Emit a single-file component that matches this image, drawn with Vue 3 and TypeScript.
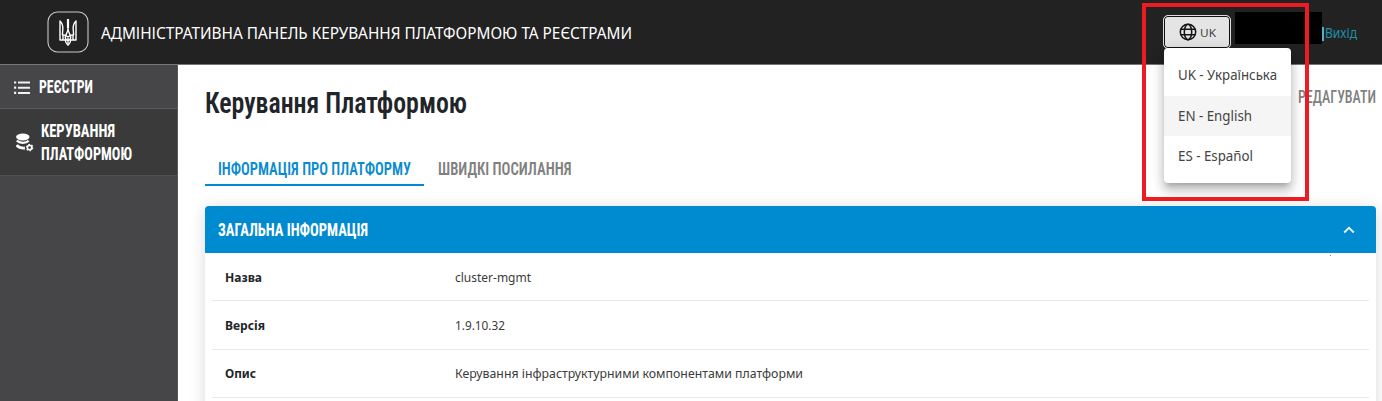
<script setup lang="ts">
import { defineComponent, h } from 'vue'

// Single line of text fitted to a given width; its box is as tall as the capitals.
const FitText = defineComponent({
  props: {
    text: { type: String, required: true },
    w: { type: Number, required: true },
    cap: { type: Number, required: true },
  },
  setup(props) {
    return () =>
      h('svg', { width: props.w, height: props.cap, style: { display: 'block', overflow: 'visible', flex: 'none' } }, [
        h('text', { x: 0, y: props.cap, textLength: props.w, lengthAdjust: 'spacingAndGlyphs', fill: 'currentColor' }, props.text),
      ])
  },
})

interface Line { text: string; w: number }
interface Row { label: Line; value: Line }

const languages: (Line & { active: boolean })[] = [
  { text: 'UK - Українська', w: 99, active: false },
  { text: 'EN - English', w: 74, active: true },
  { text: 'ES - Español', w: 75, active: false },
]

const rows: Row[] = [
  { label: { text: 'Назва', w: 37 }, value: { text: 'cluster-mgmt', w: 76 } },
  { label: { text: 'Версія', w: 40 }, value: { text: '1.9.10.32', w: 50 } },
  { label: { text: 'Опис', w: 31 }, value: { text: 'Керування інфраструктурними компонентами платформи', w: 348 } },
]
</script>

<template>
  <div class="page">
    <header class="header">
      <svg class="emblem" width="42" height="42" viewBox="0 0 42 42" fill="none">
        <rect x="1" y="1" width="40" height="40" rx="9.5" stroke="#c9c9c9" stroke-width="1.1" />
        <g stroke="#fff" stroke-width="1.4" stroke-linejoin="round">
          <path d="M13 10v19h5.200c.4 2.600 1.400 4.300 2.800 5.300 1.400-1 2.400-2.700 2.800-5.300H29V10c-2.200 2-3 4.800-2.800 8.200l.4 5.500c-2.300 0-4 .6-5.600 2.300-1.600-1.700-3.300-2.300-5.600-2.300l.4-5.500c.2-3.400-.6-6.200-2.800-8.200z" />
          <path d="M21 8.500v9c0 4-2.700 6-2.700 9 0 1.500 1 2.600 2.700 3.200 1.700-.6 2.700-1.700 2.700-3.200 0-3-2.700-5-2.700-9M16 24v5M26 24v5M18 29h6M21 27v6" />
          <path d="M21 8v9" stroke-width="2.200" />
        </g>
      </svg>
      <FitText class="brand" text="АДМІНІСТРАТИВНА ПАНЕЛЬ КЕРУВАННЯ ПЛАТФОРМОЮ ТА РЕЄСТРАМИ" :w="531" :cap="11" />
      <button class="lang" type="button">
        <svg width="18" height="18" viewBox="0 0 18 18" fill="none" stroke="#151515" stroke-width="1.5">
          <circle cx="9" cy="9" r="7.700" />
          <ellipse cx="9" cy="9" rx="3.700" ry="7.700" />
          <path d="M1.800 6.300h14.400M1.800 11.700h14.400" />
        </svg>
        <FitText class="code" text="UK" :w="16" :cap="9" />
      </button>
      <div class="user"></div>
      <div class="divider"></div>
      <FitText class="logout" text="Вихід" :w="32" :cap="10" />
    </header>

    <div class="body">
      <nav class="side">
        <div class="item">
          <svg class="list-icon" width="16" height="14" viewBox="0 0 16 14" fill="#f1f1f1">
            <path d="M0 .4h2.200v2.200H0zM0 5.600h2.200v2.200H0zM0 10.800h2.200v2.200H0zM4 .5h12v2H4zM4 5.700h12v2H4zM4 10.900h12v2H4z" />
          </svg>
          <FitText text="РЕЄСТРИ" :w="54" :cap="13" />
        </div>
        <div class="item current">
          <svg class="db-icon" width="18" height="19" viewBox="0 0 18 19" fill="none">
            <ellipse cx="6.800" cy="4" rx="6.700" ry="3.400" fill="#fff" />
            <path d="M.8 7.600c1.500 1.700 3.800 2.200 6 2.200s4.400-.5 5.900-2.100" stroke="#fff" stroke-width="2.200" />
            <path d="M.6 12c1.800 2.600 4.500 3.300 8.300 3" stroke="#fff" stroke-width="2.800" />
            <circle cx="13.600" cy="14.600" r="2.200" stroke="#fff" stroke-width="1.600" />
            <circle cx="13.600" cy="14.600" r="3.200" stroke="#fff" stroke-width="1.100" stroke-dasharray="1.700 1.650" />
          </svg>
          <div class="two-lines">
            <FitText text="КЕРУВАННЯ" :w="74" :cap="13" />
            <FitText text="ПЛАТФОРМОЮ" :w="91" :cap="13" />
          </div>
        </div>
      </nav>

      <main class="main">
        <div class="heading">
          <FitText class="title" text="Керування Платформою" :w="262" :cap="21" />
          <FitText class="edit" text="РЕДАГУВАТИ" :w="78" :cap="13" />
        </div>
        <div class="tabs">
          <div class="tab selected"><FitText text="ІНФОРМАЦІЯ ПРО ПЛАТФОРМУ" :w="193" :cap="13" /></div>
          <div class="tab"><FitText text="ШВИДКІ ПОСИЛАННЯ" :w="133.5" :cap="13" /></div>
        </div>
        <section class="card">
          <div class="card-head">
            <FitText text="ЗАГАЛЬНА ІНФОРМАЦІЯ" :w="150" :cap="13" />
            <svg width="12" height="8" viewBox="0 0 12 8" fill="none" stroke="#e8f4fb" stroke-width="1.900">
              <path d="M1.200 6.500 6 1.800l4.800 4.700" />
            </svg>
          </div>
          <div class="rows">
            <i class="speck"></i>
            <div v-for="row in rows" :key="row.label.text" class="row">
              <div class="label"><FitText :text="row.label.text" :w="row.label.w" :cap="10" /></div>
              <FitText class="value" :text="row.value.text" :w="row.value.w" :cap="10" />
            </div>
          </div>
        </section>
      </main>
    </div>

    <div class="menu">
      <div v-for="lang in languages" :key="lang.text" class="option" :class="{ active: lang.active }">
        <FitText :text="lang.text" :w="lang.w" :cap="10" />
      </div>
    </div>
    <div class="highlight"></div>
  </div>
</template>

<style>
body { margin: 0; background: #fff; }
</style>

<style scoped>
.page {
  position: relative;
  width: 1382px;
  height: 401px;
  overflow: hidden;
  box-sizing: border-box;
  font-family: "Noto Sans", "Open Sans", sans-serif;
  color: #212529;
}
.header {
  display: flex;
  align-items: center;
  height: 64px;
  background: #222;
  border-bottom: 1px solid #777;
  box-sizing: content-box;
}
.emblem { margin-left: 47px; }
.brand { margin-left: 12px; margin-top: 3px; font-size: 15.600px; color: #fff; }
.lang {
  display: flex;
  align-items: center;
  gap: 3px;
  width: 68px;
  height: 34px;
  margin: 0 4px 0 531px;
  padding: 0 0 0 15px;
  box-sizing: border-box;
  border: 1px solid #ddd;
  border-radius: 5px;
  background: #e4e4e4;
  box-shadow: inset 0 0 0 1px #111;
  font-family: inherit;
  font-size: 11.300px;
  color: #46413e;
}
.code { margin-top: 1px; }
.user { width: 87px; height: 32px; margin-top: -8px; background: #000; }
.divider { width: 2px; height: 14px; margin-top: 3px; background: #4fb3c5; }
.logout { margin-left: 1px; margin-top: 2px; font-size: 13.500px; color: #2190a7; }
.body { display: flex; height: 336px; }
.side {
  width: 178px;
  flex: none;
  box-sizing: border-box;
  background: #464648;
  border-right: 1px solid #5a5a5c;
  font-family: Roboto, sans-serif;
  font-stretch: 75%;
  font-size: 17.500px;
  font-weight: 700;
  color: #fff;
}
.item { display: flex; align-items: center; height: 43px; border-bottom: 1px solid #5b5b5d; }
.list-icon { margin: 2px 9px 0 14px; }
.item.current { height: 66px; background: #3a3a3a; border-bottom-color: #505052; }
.db-icon { margin: 0 7px 0 16px; }
.two-lines { display: flex; flex-direction: column; gap: 10px; }
.main { flex: 1; padding: 27px 6px 0 27px; font-stretch: 75%; }
.heading { display: flex; justify-content: space-between; height: 65px; font-family: Roboto, sans-serif; }
.title { font-size: 29.500px; font-weight: 600; }
.edit { margin-top: -2px; font-size: 17.800px; font-weight: 500; color: #808080; }
.tabs { display: flex; height: 29px; font-family: Roboto, sans-serif; font-size: 17.500px; font-weight: 600; color: #808080; }
.tab { box-sizing: border-box; padding: 5px 13px 0; height: 29px; }
.tab + .tab { padding-left: 14px; }
.tab.selected { color: #0a8bd0; border-bottom: 2px solid #008acf; }
.card {
  height: 230px;
  margin-top: 20px;
  border-radius: 4px 4px 0 0;
  background: #fff;
  box-shadow: 0 2px 16px rgba(0, 0, 0, .15);
}
.card-head {
  display: flex;
  align-items: center;
  justify-content: space-between;
  height: 47px;
  padding: 0 21px 0 13px;
  border-radius: 4px 4px 0 0;
  background: #008acf;
  font-family: Roboto, sans-serif;
  font-size: 17.500px;
  font-weight: 700;
  color: #fff;
}
.rows { position: relative; padding: 0 7px 0 7px; font-size: 13.200px; font-stretch: 100%; }
.row {
  display: flex;
  align-items: center;
  height: 48.300px;
  box-sizing: border-box;
  border-bottom: 1px solid #e7e8ed;
}
.label { width: 230px; padding-left: 13px; font-weight: 700; box-sizing: content-box; color: #212529; }
.value { color: #3b3b3b; }
.speck { position: absolute; left: 1125px; top: 2px; width: 1px; height: 1px; background: #888; }
.menu {
  position: absolute;
  left: 1164px;
  top: 48px;
  width: 127px;
  height: 135px;
  padding: 7px 0;
  box-sizing: border-box;
  border-radius: 4px;
  background: #fff;
  box-shadow: 0 5px 5px -3px rgba(0, 0, 0, .2), 0 8px 10px 1px rgba(0, 0, 0, .14), 0 3px 14px 2px rgba(0, 0, 0, .12);
  font-size: 13.600px;
  font-weight: 400;
  color: #444;
}
.option { display: flex; align-items: center; height: 40.500px; padding-left: 13.500px; }
.option.active { background: #f5f5f5; }
.highlight {
  position: absolute;
  left: 1142px;
  top: 3px;
  width: 167px;
  height: 198px;
  box-sizing: border-box;
  border: 4px solid #ed1c24;
}
</style>
